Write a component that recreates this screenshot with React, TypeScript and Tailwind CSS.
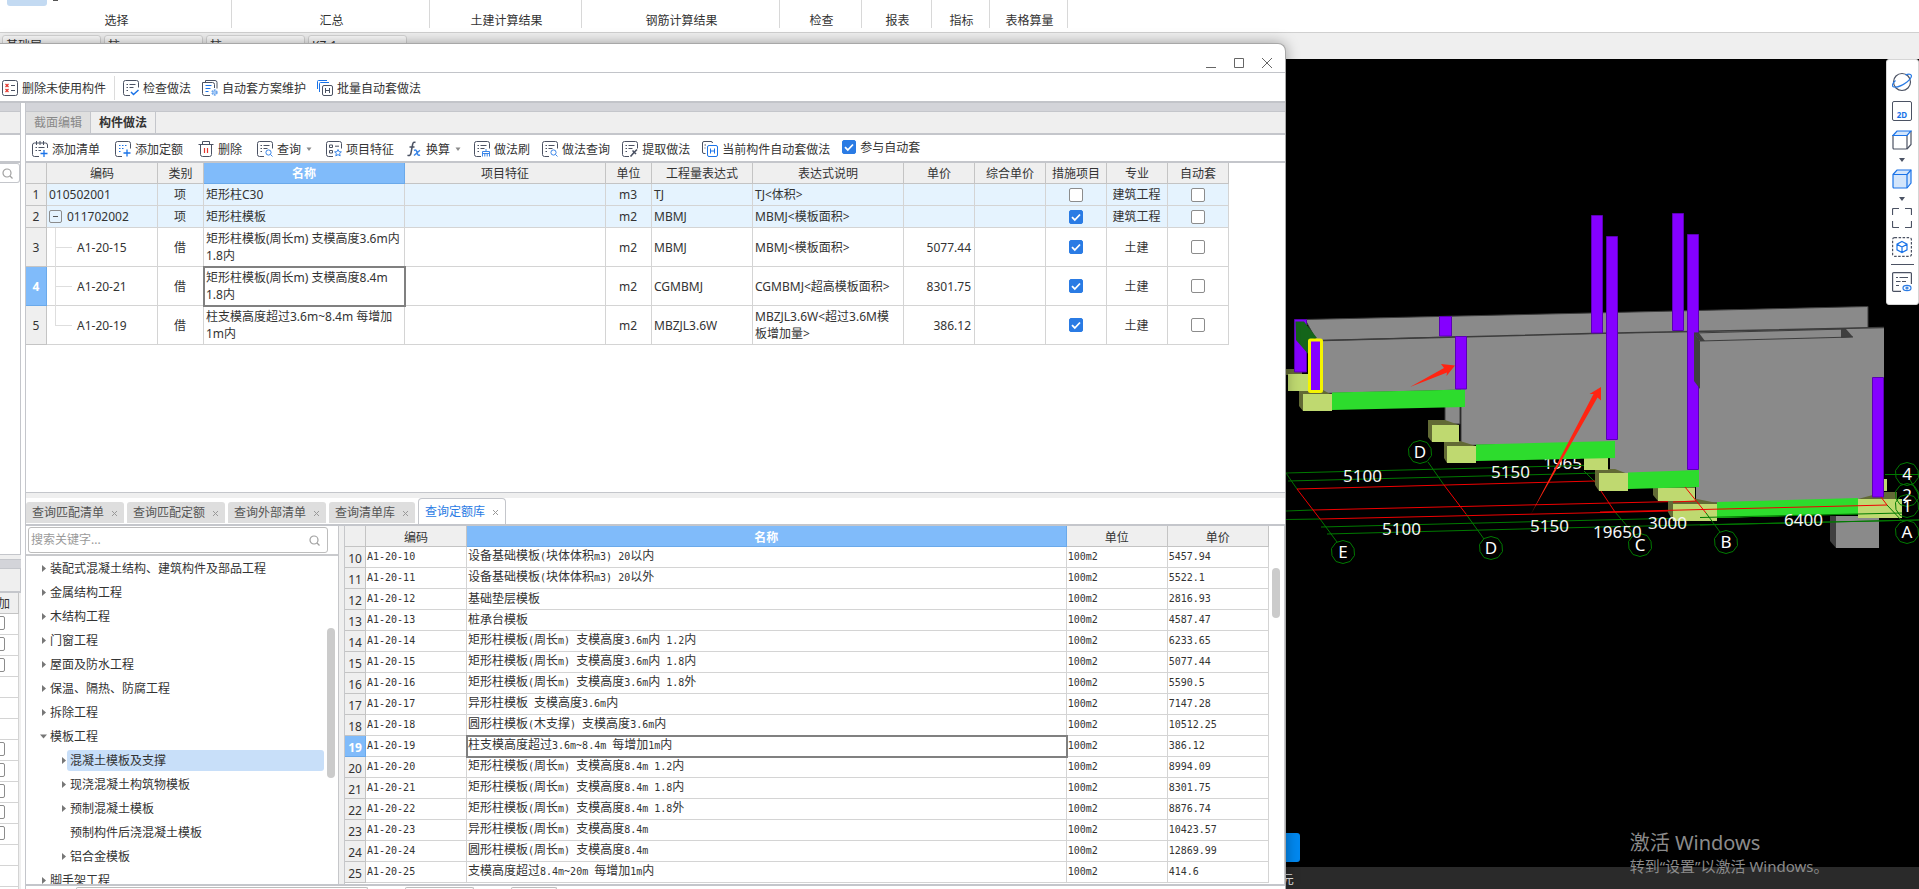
import type { ReactNode } from "react";

const UI_FONT = "font-['Noto_Sans','Noto_Sans_CJK_SC',sans-serif]";

const ribbonGroups = [
  { name: "选择", width: "w-[232px]" },
  { name: "汇总", width: "w-[198px]" },
  { name: "土建计算结果", width: "w-[152px]" },
  { name: "钢筋计算结果", width: "w-[198px]" },
  { name: "检查", width: "w-[82px]" },
  { name: "报表", width: "w-[70px]" },
  { name: "指标", width: "w-[58px]" },
  { name: "表格算量", width: "w-[78px]" },
];

const filters = [
  { label: "楼层", value: "基础层" },
  { label: "构件大类", value: "柱" },
  { label: "构件类型", value: "柱" },
  { label: "构件", value: "KZ-1" },
];

type MethodRow = {
  no: number;
  code: string;
  level: "root" | "parent" | "child";
  kind: string;
  name: string;
  unit: string;
  expr: string;
  desc: string;
  price: string;
  measure: boolean;
  major: string;
};

const methodRows: MethodRow[] = [
  { no: 1, code: "010502001", level: "root", kind: "项", name: "矩形柱C30", unit: "m3", expr: "TJ", desc: "TJ<体积>", price: "", measure: false, major: "建筑工程" },
  { no: 2, code: "011702002", level: "parent", kind: "项", name: "矩形柱模板", unit: "m2", expr: "MBMJ", desc: "MBMJ<模板面积>", price: "", measure: true, major: "建筑工程" },
  { no: 3, code: "A1-20-15", level: "child", kind: "借", name: "矩形柱模板(周长m) 支模高度3.6m内 1.8内", unit: "m2", expr: "MBMJ", desc: "MBMJ<模板面积>", price: "5077.44", measure: true, major: "土建" },
  { no: 4, code: "A1-20-21", level: "child", kind: "借", name: "矩形柱模板(周长m) 支模高度8.4m 1.8内", unit: "m2", expr: "CGMBMJ", desc: "CGMBMJ<超高模板面积>", price: "8301.75", measure: true, major: "土建" },
  { no: 5, code: "A1-20-19", level: "child", kind: "借", name: "柱支模高度超过3.6m~8.4m 每增加1m内", unit: "m2", expr: "MBZJL3.6W", desc: "MBZJL3.6W<超过3.6M模板增加量>", price: "386.12", measure: true, major: "土建" },
];

const quotaRows = [
  [10, "A1-20-10", "设备基础模板(块体体积m3) 20以内", "5457.94"],
  [11, "A1-20-11", "设备基础模板(块体体积m3) 20以外", "5522.1"],
  [12, "A1-20-12", "基础垫层模板", "2816.93"],
  [13, "A1-20-13", "桩承台模板", "4587.47"],
  [14, "A1-20-14", "矩形柱模板(周长m) 支模高度3.6m内 1.2内", "6233.65"],
  [15, "A1-20-15", "矩形柱模板(周长m) 支模高度3.6m内 1.8内", "5077.44"],
  [16, "A1-20-16", "矩形柱模板(周长m) 支模高度3.6m内 1.8外", "5590.5"],
  [17, "A1-20-17", "异形柱模板 支模高度3.6m内", "7147.28"],
  [18, "A1-20-18", "圆形柱模板(木支撑) 支模高度3.6m内", "10512.25"],
  [19, "A1-20-19", "柱支模高度超过3.6m~8.4m 每增加1m内", "386.12"],
  [20, "A1-20-20", "矩形柱模板(周长m) 支模高度8.4m 1.2内", "8994.09"],
  [21, "A1-20-21", "矩形柱模板(周长m) 支模高度8.4m 1.8内", "8301.75"],
  [22, "A1-20-22", "矩形柱模板(周长m) 支模高度8.4m 1.8外", "8876.74"],
  [23, "A1-20-23", "异形柱模板(周长m) 支模高度8.4m", "10423.57"],
  [24, "A1-20-24", "圆形柱模板(周长m) 支模高度8.4m", "12869.99"],
  [25, "A1-20-25", "支模高度超过8.4m~20m 每增加1m内", "414.6"],
] as const;

const tree = [
  { name: "装配式混凝土结构、建筑构件及部品工程", depth: 0, arrow: "right" },
  { name: "金属结构工程", depth: 0, arrow: "right" },
  { name: "木结构工程", depth: 0, arrow: "right" },
  { name: "门窗工程", depth: 0, arrow: "right" },
  { name: "屋面及防水工程", depth: 0, arrow: "right" },
  { name: "保温、隔热、防腐工程", depth: 0, arrow: "right" },
  { name: "拆除工程", depth: 0, arrow: "right" },
  { name: "模板工程", depth: 0, arrow: "down" },
  { name: "混凝土模板及支撑", depth: 1, arrow: "right", active: true },
  { name: "现浇混凝土构筑物模板", depth: 1, arrow: "right" },
  { name: "预制混凝土模板", depth: 1, arrow: "right" },
  { name: "预制构件后浇混凝土模板", depth: 1, arrow: "" },
  { name: "铝合金模板", depth: 1, arrow: "right" },
  { name: "脚手架工程", depth: 0, arrow: "right" },
];

const queryTabs = ["查询匹配清单", "查询匹配定额", "查询外部清单", "查询清单库", "查询定额库"];

/* ---------- icons ---------- */

function Icon({ children }: { children: ReactNode }) {
  return (
    <svg width="16" height="16" viewBox="0 0 16 16" fill="none" stroke="#4b5263" strokeWidth="1" className="shrink-0" aria-hidden="true">
      {children}
    </svg>
  );
}

const sheet = "M7 15.500H2.500a2 2 0 0 1-2-2V2.500a2 2 0 0 1 2-2h11a2 2 0 0 1 2 2v5";
const sheetLines = "M3.500 4.500h1.500M6.500 4.500h6M3.500 7.500h1.500M6.500 7.500h4M3.500 10.500h1.500";

const icons = {
  removeUnused: (
    <Icon>
      <rect x="0.500" y="0.500" width="15" height="15" rx="2" />
      <path d="M9 5.500h4M9 10.500h4" />
      <path stroke="#e5342b" strokeWidth="1.200" d="M3.500 4l3 3M6.500 4l-3 3M3.500 9l3 3M6.500 9l-3 3" />
    </Icon>
  ),
  check: (
    <Icon>
      <path d={sheet} />
      <path d={sheetLines} />
      <path stroke="#1a73e8" strokeWidth="1.500" d="M8 12l2.500 2.500L15.500 10" />
    </Icon>
  ),
  scheme: (
    <Icon>
      <path d="M3.500 2.500V.500h9.500a2 2 0 0 1 2 2v6" />
      <path d="M8 15.500H2.500a2 2 0 0 1-2-2V2.500h10a2 2 0 0 1 2 2V8" />
      <path stroke="#1a73e8" d="M3.500 5.500h6M3.500 8.500h5M3.500 11.500h3" />
      <circle cx="12.500" cy="12.500" r="2.300" stroke="#6fa8ee" strokeWidth="1.800" strokeDasharray="1.500 0.800" fill="#a8cbf5" />
    </Icon>
  ),
  batch: (
    <Icon>
      <path stroke="#1a73e8" d="M.500 9V1.500a1 1 0 0 1 1-1H10M2.500 12V3.500a1 1 0 0 1 1-1H12" />
      <rect x="5.500" y="5.500" width="10" height="10" rx="1.500" />
      <path d="M8.500 8v5M12.500 8v5M8.500 10.500h4" />
    </Icon>
  ),
  addList: (
    <Icon>
      <path d="M7 15.500H2.500a2 2 0 0 1-2-2V4a2 2 0 0 1 2-2h11a2 2 0 0 1 2 2v3" />
      <path d="M4.500 0v4M8 0v4M11.500 0v4M3.500 6.500h1.500M6.500 6.500h6M3.500 9.500h1.500M6.500 9.500H9" />
      <path stroke="#1a73e8" strokeWidth="1.300" d="M12 9v7M8.500 12.500h7" />
    </Icon>
  ),
  addQuota: (
    <Icon>
      <path d={sheet} />
      <path stroke="#1a73e8" strokeDasharray="1.500 1.500" d="M4 4.500h8M4 7.500h5M4 10.500h3" />
      <path stroke="#1a73e8" strokeWidth="1.300" d="M12 8.500v7M8.500 12h7" />
    </Icon>
  ),
  trash: (
    <Icon>
      <path d="M.500 3.500h15M4.500 3.500V.500h7v3M2.500 3.500v10a2 2 0 0 0 2 2h7a2 2 0 0 0 2-2v-10" />
      <path stroke="#e5342b" strokeWidth="1.200" d="M6.500 7v5M9.500 7v5" />
    </Icon>
  ),
  query: (
    <Icon>
      <path d={sheet} />
      <path d={sheetLines} />
      <circle cx="11.500" cy="11.500" r="2.600" stroke="#3b86e8" />
      <path stroke="#3b86e8" d="M13.500 13.500l2 2" />
    </Icon>
  ),
  feature: (
    <Icon>
      <path d="M7 15.500H2.500a2 2 0 0 1-2-2V2.500a2 2 0 0 1 2-2h11a2 2 0 0 1 2 2v5" />
      <path d="M3.500 4h3v2.500h-3zM3.500 9.500h3V12h-3zM9 5.200h4" />
      <path stroke="#3b86e8" d="M12 8.500l1 2.200 2.400.2-1.800 1.600.6 2.400-2.200-1.300-2.200 1.300.6-2.400-1.800-1.600 2.400-.2z" />
    </Icon>
  ),
  fx: (
    <Icon>
      <path strokeWidth="1.500" d="M9.500 1.500C8 .6 7 1.500 6.600 3.500L5 12c-.4 2-1.400 3.200-3.500 2.300M3.500 6h5" />
      <path stroke="#3b86e8" strokeWidth="1.500" d="M8 9.500c2-1 2.500 0 3 2s1 3.500 3 2.300M14 9.300L8 14.500" />
    </Icon>
  ),
  brush: (
    <Icon>
      <path d={sheet} />
      <path d={sheetLines} />
      <path stroke="#3b86e8" d="M12 8V10.500M8.500 10.500h7M8.500 12.500h7M8.500 10.500v5M10.800 12.500v3M13.200 12.500v3M15.500 10.500v5" />
    </Icon>
  ),
  extract: (
    <Icon>
      <path d={sheet} />
      <path d={sheetLines} />
      <path strokeWidth="1.600" d="M8.500 15.500l3.500-4M10.500 9.500l3.500 3.500M12.500 11l2.500-2.500" />
    </Icon>
  ),
  current: (
    <Icon>
      <path d="M3.500 12.500H2A1.500 1.500 0 0 1 .500 11V2A1.500 1.500 0 0 1 2 .500h7A1.500 1.500 0 0 1 10.500 2M2.500 4H4M2.500 7h1" />
      <rect x="5.500" y="4.500" width="10" height="11" rx="1.500" stroke="#1a73e8" />
      <path stroke="#1a73e8" d="M8.500 7.500v5M12.500 7.500v5M8.500 10h4" />
    </Icon>
  ),
};

function SearchGlyph() {
  return (
    <svg width="11" height="11" viewBox="0 0 11 11" fill="none" stroke="#a0a0a0" strokeWidth="1.200" aria-hidden="true">
      <circle cx="5" cy="5" r="4" />
      <path d="M8 8l2.500 2.500" />
    </svg>
  );
}

function Caret() {
  return (
    <svg width="8" height="5" viewBox="0 0 8 5" aria-hidden="true">
      <path d="M1.500 0.500h5L4 4z" fill="#8a8a8a" />
    </svg>
  );
}

/* ---------- small controls ---------- */

function Check({ checked, label }: { checked?: boolean; label?: string }) {
  return (
    <span className="relative inline-flex size-[14px] align-middle">
      <input
        type="checkbox"
        defaultChecked={checked}
        aria-label={label}
        className="peer size-[14px] appearance-none rounded-[2px] border border-[#8c8c8c] bg-white checked:border-[#2a7be4] checked:bg-[#2a7be4]"
      />
      <svg viewBox="0 0 14 14" fill="none" stroke="#fff" strokeWidth="1.800" className="pointer-events-none absolute inset-0 hidden peer-checked:block" aria-hidden="true">
        <path d="M3 7.200l2.800 2.800L11 4.500" />
      </svg>
    </span>
  );
}

function ToolButton({ icon, label, caret }: { icon: ReactNode; label: string; caret?: boolean }) {
  return (
    <button className="flex items-center gap-1 whitespace-nowrap">
      {icon}
      <span className="pt-[2px]">{label}</span>
      {caret && <Caret />}
    </button>
  );
}

// Latin runs are set in a half-width face so two letters fill one Chinese cell
function GridText({ text }: { text: string }) {
  return (
    <>
      {text.split(/([\x20-\x7e]+)/).map((part, i) =>
        i % 2 ? (
          <span key={i} className="whitespace-pre font-['DejaVu_Sans_Mono',monospace] text-[10px]">{part}</span>
        ) : (
          part
        )
      )}
    </>
  );
}

/* ---------- main window ---------- */

function Ribbon() {
  return (
    <header className="shrink-0">
      <nav className="relative flex h-[33px] border-b border-[#d0d0d0] bg-white">
        <span className="absolute left-[7px] top-0 h-[6px] w-[40px] rounded-b-[3px] bg-[#c3daf2]" />
        <span className="absolute left-[53px] top-0 h-px w-[5px] bg-[#555]" />
        {ribbonGroups.map((group) => (
          <div key={group.name} className={`${group.width} h-7 shrink-0 border-r border-[#d8d8d8] pl-[2px] pt-[13px] text-center leading-[15px]`}>
            {group.name}
          </div>
        ))}
      </nav>
      <div className="flex h-[26px] gap-[3px] bg-[#efefef] pl-[2px] pt-[2px]">
        {filters.map((filter) => (
          <select key={filter.label} aria-label={filter.label} className="h-[22px] w-[99px] appearance-none rounded-[3px] border border-[#d4d4d4] bg-[#fafafa] px-[3px] leading-5">
            <option>{filter.value}</option>
          </select>
        ))}
      </div>
    </header>
  );
}

const axisMarks = [
  ["D", 1420, 452], ["E", 1343, 552], ["D", 1491, 548], ["C", 1640, 545],
  ["B", 1726, 542], ["A", 1907, 532], ["4", 1907, 474], ["2", 1907, 495], ["1", 1907, 506],
] as const;

const spans = [
  ["5100", 1343, 482], ["5150", 1491, 478], ["5100", 1382, 535], ["5150", 1530, 532],
  ["19650", 1593, 538], ["3000", 1648, 529], ["6400", 1784, 526],
] as const;

function Model() {
  return (
    <svg viewBox="1286 59 633 808" preserveAspectRatio="xMinYMin meet" className="h-full w-full" role="img" aria-label="三维模型">
      <text x="1543" y="469" fill="#f5f5f5" fontSize="17">1965</text>

      {/* walls */}
      <g fill="#8a8a8a" stroke="#3c3c3c" strokeWidth="1">
        <path d="M1305 319.500L1591 313L1868 306.500V328L1317 341z" />
        <path d="M1322 340.500L1465 336.500V390L1322 393.500z" />
        <path d="M1445 405h15v19h-15z" />
      </g>
      <path d="M1461 337L1884 327.500V500L1696 503V474H1610V443L1461 445z" fill="#8a8a8a" />
      <path d="M1322 340.500L1591 333.500L1884 327.500" stroke="#3c3c3c" fill="none" strokeWidth="1.500" />
      <path d="M1461 407V445" stroke="#3c3c3c" />
      <path d="M1830 516h6v32l-6-7z" fill="#3f3f3f" />
      <path d="M1836 516h43v32h-43z" fill="#8a8a8a" />

      {/* axis grid */}
      <g stroke="#007a00" strokeWidth="1" fill="none">
        <path d="M1286 473L1600 465M1288 481L1600 473M1286 511L1313 510M1286 519.500L1320 519M1321 527L1600 520L1902 513M1327 534L1600 527L1919 520M1885 474.500H1919" />
        <path d="M1286 473L1297 489M1320 519L1337 542M1428 462L1444 485M1466 514L1484 539M1584 471L1595 482M1615 512L1635 535" />
      </g>
      <g stroke="#f00000" strokeWidth="1" fill="none">
        <path d="M1297 489L1595 481M1313 510L1696 501M1320 519L1670 511M1297 489L1320 519M1444 485L1466 514M1595 482L1615 512" />
      </g>

      {/* footings */}
      <g fill="#626a35">
        <path d="M1286 369h16v6h-16zM1299 390h24l9 5v16h-29l-4-5zM1428 420h17l14 5v17h-27l-4-5zM1444 441h16l16 5v17h-29l-3-5zM1595 469h20l13 5v17h-29l-4-6zM1653 487h42v14h-37l-5-6zM1668 498h24l25 5v18h-44l-5-9zM1884 492h13v7h-39z" />
      </g>
      <g fill="#bfd970">
        <path d="M1288 374h21v17h-21zM1303 394h29v17h-29zM1432 425h27v17h-27zM1447 446h29v17h-29zM1584 458h24v12h-24zM1599 473h29v18h-29zM1658 488h37v13h-37zM1673 504h44v17h-44zM1858 499h44v19h-44zM1884 479h3v12h-3z" />
      </g>

      {/* beams */}
      <g fill="#2ddc2d">
        <path d="M1332 392.500L1465 389.500V407L1332 410z" />
        <path d="M1476 444.500L1615 441V458L1476 461z" />
        <path d="M1628 472.500L1699 470V487L1628 489z" />
        <path d="M1717 502L1858 498V514L1717 518z" />
      </g>

      {/* columns */}
      <g fill="#8500ff" stroke="#5a00b4" strokeWidth="1">
        <path d="M1294.500 319.500h12V372h-12zM1439.500 316.500h12V336h-12zM1455.500 336.500h11V389h-11z" />
        <path d="M1591.500 215.500h11V333h-11zM1606.500 236.500h11v203h-11zM1672.500 213.500h11v117h-11zM1687.500 234.500h11V469.500h-11zM1872.500 377.500h11V497h-11z" />
      </g>
      <path d="M1295.500 321.500H1304L1317 338L1309 340V355L1296 340z" fill="#14651a" />
      <rect x="1309.500" y="340" width="12" height="51.500" rx="1" fill="#8500ff" stroke="#f4f400" strokeWidth="3" />

      {/* recess in the end wall */}
      <path d="M1694 333L1700 341V389L1694 381z" fill="#3f3f3f" />
      <path d="M1694 333H1699L1705 341H1700zM1841 329H1846L1853 337L1841 338z" fill="#3f3f3f" />
      <path d="M1700 341L1853 337M1694 333L1846 329" stroke="#3c3c3c" />

      {/* axis lines that run over the model */}
      <g strokeWidth="1" fill="none">
        <path stroke="#f00000" d="M1600 512L1887 505M1685 487L1706 513M1881 497L1887 505M1673 502L1696 501" />
        <path stroke="#007a00" d="M1700 517.500L1902 513M1700 525L1919 520M1706 513L1720 532M1887 505L1903 522M1910 480L1919 495" />
      </g>

      {axisMarks.map(([name, x, y]) => (
        <g key={`${name}-${x}-${y}`}>
          <path
            transform={`translate(${x} ${y})`}
            d="M0-11.500L7-9.500L11-3.500L11.500 3.500L7 9.500L0 11.500L-7 9.500L-11 3.500L-11.500-3.500L-7-9.500z"
            fill="none"
            stroke="#007a00"
          />
          <text x={x} y={y + 6} textAnchor="middle" fill="#fff" fontSize="17">{name}</text>
        </g>
      ))}
      {spans.map(([len, x, y]) => (
        <text key={`${len}-${x}`} x={x} y={y} fill="#f5f5f5" fontSize="17">{len}</text>
      ))}

      {/* pointer arrows */}
      <g fill="#ff2412">
        <path d="M1455 365.500L1441 364L1444 368L1410 387L1447 372.500L1446.500 376z" />
        <path d="M1601 387L1589.500 394H1593.500L1531 514L1597.500 397.500L1601 400.500z" />
      </g>
    </svg>
  );
}

function ViewIcon({ children }: { children: ReactNode }) {
  return (
    <svg width="20" height="20" viewBox="0 0 20 20" fill="none" stroke="#4b5263" strokeWidth="1.200" className="block" aria-hidden="true">
      {children}
    </svg>
  );
}

function ViewCaret() {
  return (
    <svg width="8" height="2" viewBox="0 0 8 2" className="-mb-px overflow-visible" aria-hidden="true">
      <path d="M1-1h6L4 3z" fill="#4b5263" />
    </svg>
  );
}

function ViewBar() {
  return (
    <aside className="absolute right-0 top-0 flex w-[33px] flex-col items-center gap-[9px] rounded-[3px] border border-[#d6d6d6] bg-white pb-[12px] pr-px pt-[12px]">
      <button aria-label="动态观察">
        <ViewIcon>
          <circle cx="10" cy="10" r="8.500" />
          <path stroke="#2a7be4" d="M3.500 8.500C0 11.500-.5 14.500 2 15c3 .6 9-2 13-5s5.500-6.500 3.500-7.500c-1.200-.6-3-.3-5 .4" />
        </ViewIcon>
      </button>
      <button aria-label="二维" className="flex size-[20px] items-end justify-center rounded-[2px] border border-[#4b5263] pb-px text-[8px] font-bold leading-[9px] text-[#1a73e8]">
        2D
      </button>
      <button aria-label="俯视">
        <ViewIcon>
          <path d="M1 5.500h14V18a1 1 0 0 1-1 1H2a1 1 0 0 1-1-1z" />
          <path d="M15 19l4-4.500V1" />
          <path stroke="#1a73e8" fill="#d3e5fb" d="M1 5.500L5 1h14l-4 4.500z" />
        </ViewIcon>
      </button>
      <ViewCaret />
      <button aria-label="实体显示">
        <ViewIcon>
          <g stroke="#1a73e8" fill="#d3e5fb">
            <path d="M1 5.500L5 1h14v13l-4 5H2a1 1 0 0 1-1-1z" />
            <path d="M1 5.500h14V19M15 5.500L19 1" fill="none" />
          </g>
        </ViewIcon>
      </button>
      <ViewCaret />
      <button aria-label="全屏">
        <ViewIcon>
          <path d="M.500 7V1.500a1 1 0 0 1 1-1H7M13 .500h5.500a1 1 0 0 1 1 1V7M19.500 13v5.500a1 1 0 0 1-1 1H13M7 19.500H1.500a1 1 0 0 1-1-1V13" />
        </ViewIcon>
      </button>
      <button aria-label="局部三维">
        <ViewIcon>
          <rect x="0.600" y="0.600" width="18.800" height="18.800" rx="2" strokeDasharray="2.500 1.500" />
          <path stroke="#1a73e8" d="M10 4.500l5 2.700v5.600l-5 2.700-5-2.700V7.200zM5 7.200l5 2.800 5-2.800M10 10v5.500" />
        </ViewIcon>
      </button>
      <hr className="-my-[2px] w-[23px] border-[#4b5263]" />
      <button aria-label="显示设置">
        <ViewIcon>
          <path d="M9 19.400H1.600a1 1 0 0 1-1-1V1.600a1 1 0 0 1 1-1h16.800a1 1 0 0 1 1 1V12" />
          <path d="M4 5.500h2M7.500 5.500H16M4 9.500h4.500M10 9.500h4M4 13.500h3" />
          <ellipse cx="15" cy="16" rx="4" ry="2.700" stroke="#2a7be4" />
          <circle cx="15" cy="16" r="1" stroke="#2a7be4" />
        </ViewIcon>
      </button>
    </aside>
  );
}

function Viewport() {
  return (
    <main className="relative ml-[67%] flex min-h-0 flex-1 flex-col bg-black">
      <div className="min-h-0 flex-1">
        <Model />
      </div>
      <button aria-label="消息" className="absolute bottom-[27px] left-[-8px] h-[29px] w-[22px] rounded-[3px] bg-[#0088f0]" />
      <footer className="h-[22px] shrink-0 bg-[#2a2a2a] leading-[26px] text-[#e8e8e8]">
        <span className="-ml-1">元</span>
      </footer>
      <div className="absolute bottom-[13px] left-[344px] whitespace-nowrap text-[#8b8b8b]">
        <p className="text-[20px] leading-[26px]">激活 Windows</p>
        <p className="text-[15px] leading-[20px]">转到“设置”以激活 Windows。</p>
      </div>
      <ViewBar />
    </main>
  );
}

/* ---------- dialog ---------- */

const th = "border-b border-r border-[#c4c4c4] bg-[#efefef] pt-px font-normal leading-4";
const thActive = "border-b border-r border-[#6aa9ea] bg-[#80bbfa] pt-px font-bold leading-4 text-white";

function MethodTable() {
  return (
    <table className="w-[1203px] table-fixed border-separate border-spacing-0 leading-[17px]">
      <colgroup>
        <col className="w-[21px]" />
        <col className="w-[111px]" />
        <col className="w-[46px]" />
        <col className="w-[201px]" />
        <col className="w-[201px]" />
        <col className="w-[46px]" />
        <col className="w-[101px]" />
        <col className="w-[151px]" />
        <col className="w-[71px]" />
        <col className="w-[71px]" />
        <col className="w-[61px]" />
        <col className="w-[61px]" />
        <col className="w-[61px]" />
      </colgroup>
      <thead>
        <tr className="h-[21px]">
          {["", "编码", "类别", "名称", "项目特征", "单位", "工程量表达式", "表达式说明", "单价", "综合单价", "措施项目", "专业", "自动套"].map((name) => (
            <th key={name} className={name === "名称" ? thActive : th}>{name}</th>
          ))}
        </tr>
      </thead>
      <tbody>
        {methodRows.map((row) => {
          const active = row.no === 4;
          const cell = `border-b border-r border-[#d4d4d4] pl-[2px] pr-[3px] ${row.level === "child" ? "bg-white" : "bg-[#e5f3fe]"}`;
          return (
            <tr key={row.no} className={row.level === "child" ? "h-[39px]" : "h-[22px]"}>
              <th className={active ? thActive : th}>{row.no}</th>
              <td className={`${cell} relative`}>
                {row.level === "parent" && (
                  <span className="flex items-center gap-[5px]">
                    <button aria-label="折叠" className="flex size-[13px] items-center justify-center rounded-[2px] border border-[#8c8c8c]">
                      <span className="h-px w-[5px] bg-[#555]" />
                    </button>
                    {row.code}
                  </span>
                )}
                {row.level === "root" && row.code}
                {row.level === "child" && (
                  <>
                    <span className={`absolute left-[8px] top-0 border-l border-[#dedede] ${row.no === 5 ? "h-[19px]" : "h-[39px]"}`} />
                    <span className="absolute left-[8px] top-[19px] w-[17px] border-t border-[#dedede]" />
                    <span className="pl-[28px]">{row.code}</span>
                  </>
                )}
              </td>
              <td className={`${cell} text-center`}>{row.kind}</td>
              <td className={active ? `${cell} relative outline-2 -outline-offset-1 outline-[#808080]` : cell}>{row.name}</td>
              <td className={cell} />
              <td className={`${cell} text-center`}>{row.unit}</td>
              <td className={cell}>{row.expr}</td>
              <td className={cell}>{row.desc}</td>
              <td className={`${cell} text-right`}>{row.price}</td>
              <td className={cell} />
              <td className={`${cell} text-center leading-none`}><Check checked={row.measure} label="措施项目" /></td>
              <td className={`${cell} text-center`}>{row.major}</td>
              <td className={`${cell} text-center leading-none`}><Check label="自动套" /></td>
            </tr>
          );
        })}
      </tbody>
    </table>
  );
}

function QuotaTree() {
  return (
    <div className="relative flex w-[313px] shrink-0 flex-col border-r border-[#c6c7ca] bg-white">
      <div className="h-[30px] shrink-0 border-b-2 border-[#c9cacd] pl-[2px] pt-px">
        <label className="flex h-[26px] w-[300px] items-center rounded-[3px] border border-[#bdbdbd] pl-[2px] pr-[7px]">
          <input placeholder="搜索关键字..." aria-label="搜索关键字" className="min-w-0 flex-1 outline-none placeholder:text-[#9a9a9a]" />
          <SearchGlyph />
        </label>
      </div>
      <ul className="min-h-0 flex-1 overflow-hidden">
        {tree.map((node) => (
          <li key={node.name} className={`flex h-6 items-center ${node.depth ? "pl-[34px]" : "pl-[14px]"}`}>
            <svg width="7" height="7" viewBox="0 0 7 7" className="shrink-0" aria-hidden="true">
              {node.arrow === "right" && <path d="M2 0l4 3.500L2 7z" fill="#777" />}
              {node.arrow === "down" && <path d="M0 1.500h7L3.500 5.500z" fill="#777" />}
            </svg>
            <a
              href="#"
              className={node.active ? "mr-[14px] h-[21px] flex-1 rounded-[3px] bg-[#c8dff9] pl-[3px] leading-[21px]" : "pl-[3px] leading-[21px]"}
            >
              {node.name}
            </a>
          </li>
        ))}
      </ul>
      <span className="absolute right-[3px] top-[102px] h-[150px] w-2 rounded-full bg-[#cbcbcb]" />
    </div>
  );
}

function QuotaTable() {
  return (
    <div className="relative flex min-w-0 flex-1 overflow-hidden border-x border-[#c6c7ca] bg-white pr-[15px]">
      <table className="h-fit w-full table-fixed border-separate border-spacing-0 font-['Noto_Sans_CJK_SC',sans-serif] leading-4">
        <colgroup>
          <col className="w-[21px]" />
          <col className="w-[101px]" />
          <col />
          <col className="w-[101px]" />
          <col className="w-[101px]" />
        </colgroup>
        <thead>
          <tr className="h-[21px]">
            {["", "编码", "名称", "单位", "单价"].map((name) => (
              <th key={name} className={name === "名称" ? thActive : th}>{name}</th>
            ))}
          </tr>
        </thead>
        <tbody>
          {quotaRows.map(([no, code, name, price]) => {
            const cell = "border-b border-r border-[#d4d4d4] px-px pb-[2px]";
            return (
              <tr key={no} className="h-[21px]">
                <th className={`${no === 19 ? thActive : th} ${UI_FONT}`}>
                  <span className="block pt-[2px]">{no}</span>
                </th>
                <td className={cell}><GridText text={code} /></td>
                <td className={no === 19 ? `${cell} relative outline-2 -outline-offset-1 outline-[#808080]` : cell}>
                  <GridText text={name} />
                </td>
                <td className={cell}><GridText text="100m2" /></td>
                <td className={cell}><GridText text={price} /></td>
              </tr>
            );
          })}
        </tbody>
      </table>
      <span className="absolute right-1 top-[42px] h-[50px] w-2 rounded-full bg-[#cbcbcb]" />
    </div>
  );
}

function SideSliver() {
  const flags = [true, true, true, false, false, false, true, true, true, true, true, false, false, false];
  return (
    <aside className="flex w-[21px] shrink-0 flex-col overflow-hidden bg-[#efefef]">
      <div className="flex h-[452px] shrink-0 flex-col border-b border-r border-[#c4c6cb] bg-white">
        <div className="h-[9px] shrink-0 border-b border-[#c4c6cb] bg-[#d3d4d9]" />
        <div className="h-[23px] shrink-0 border-b-2 border-[#c4c6cb] bg-[#efefef]" />
        <div className="h-[28px] shrink-0 border-b-2 border-[#c4c6cb]" />
        <div className="flex h-[20px] shrink-0 items-center rounded-r-[3px] border-y border-r border-[#c4c6cb] pl-[2px]">
          <SearchGlyph />
        </div>
      </div>
      <div className="mt-1 h-[10px] shrink-0 border-y border-[#c4c6cb] bg-[#d3d4d9]" />
      <div className="h-[24px] shrink-0 border-b-2 border-r border-[#c4c6cb] bg-[#efefef]" />
      <table className="w-[19px] table-fixed border-separate border-spacing-0">
        <thead>
          <tr className="h-[21px]">
            <th className={`${th} text-left`}>
              <span className="-ml-[2px]">加</span>
            </th>
          </tr>
        </thead>
        <tbody>
          {flags.map((shown, i) => (
            <tr key={i} className="h-[21px]">
              <td className="border-b border-r border-[#d4d4d4] bg-white leading-none">
                {shown && (
                  <span className="-ml-[9px] inline-flex">
                    <Check label="附加" />
                  </span>
                )}
              </td>
            </tr>
          ))}
        </tbody>
      </table>
    </aside>
  );
}

function MethodDialog() {
  return (
    <section
      role="dialog"
      aria-label="构件做法"
      className="absolute bottom-0 left-0 top-[43px] flex w-[67%] flex-col overflow-hidden rounded-tr-[8px] border-r border-t border-[#a8a8a8] bg-white shadow-[0_0_14px_rgba(0,0,0,0.35)]"
    >
      <div className="flex h-[29px] shrink-0 items-center justify-end gap-[18px] border-b border-[#c2c4c9] pr-[13px] pt-[9px]">
        {[
          ["最小化", "M0 9.500h10"],
          ["最大化", "M0.500 0.500h9v9h-9z"],
          ["关闭", "M0 0l10 10M10 0L0 10"],
        ].map(([label, d]) => (
          <button key={label} aria-label={label}>
            <svg width="10" height="10" viewBox="0 0 10 10" fill="none" stroke="#666" aria-hidden="true">
              <path d={d} />
            </svg>
          </button>
        ))}
      </div>

      <div className="flex h-[30px] shrink-0 items-center border-b-2 border-[#c2c4c9] pl-[2px] pt-[2px]">
        <ToolButton icon={icons.removeUnused} label="删除未使用构件" />
        <span className="mx-2 h-6 w-px bg-[#dcdcdc]" />
        <div className="flex gap-[11px]">
          <ToolButton icon={icons.check} label="检查做法" />
          <ToolButton icon={icons.scheme} label="自动套方案维护" />
          <ToolButton icon={icons.batch} label="批量自动套做法" />
        </div>
      </div>

      <div className="flex min-h-0 flex-1">
        <SideSliver />
        <div className="ml-1 flex min-w-0 flex-1 flex-col border-l border-[#c4c6cb]">
          <div className="h-[9px] shrink-0 border-b border-[#c4c6cb] bg-[#d3d4d9]" />
          <div className="flex h-[23px] shrink-0 border-b-2 border-[#c4c6cb] bg-[#efefef]">
            <button className="w-[65px] border-r border-[#c4c6cb] bg-[#dfdfdf] text-[#888]">截面编辑</button>
            <button className="w-[65px] border-r border-[#c4c6cb] font-bold">构件做法</button>
          </div>
          <div className="flex h-[28px] shrink-0 items-center gap-[13px] border-b-2 border-[#c4c6cb] pl-[6px] pt-[2px]">
            <div className="flex gap-[15px]">
              <ToolButton icon={icons.addList} label="添加清单" />
              <ToolButton icon={icons.addQuota} label="添加定额" />
              <ToolButton icon={icons.trash} label="删除" />
              <ToolButton icon={icons.query} label="查询" caret />
            </div>
            <div className="flex items-center gap-3">
              <ToolButton icon={icons.feature} label="项目特征" />
              <ToolButton icon={icons.fx} label="换算" caret />
              <ToolButton icon={icons.brush} label="做法刷" />
              <ToolButton icon={icons.query} label="做法查询" />
              <ToolButton icon={icons.extract} label="提取做法" />
              <ToolButton icon={icons.current} label="当前构件自动套做法" />
              <label className="flex items-center gap-1 pb-1">
                <Check checked />
                <span className="pt-px">参与自动套</span>
              </label>
            </div>
          </div>

          <div className="min-h-0 flex-1 border-b border-[#c4c6cb]">
            <MethodTable />
          </div>

          <div className="flex h-[396px] shrink-0 flex-col border-t-[5px] border-[#efefef]">
            <div className="flex h-7 shrink-0 items-end gap-[3px] border-b-2 border-[#c4c6cb]">
              {queryTabs.map((tab, i) => (
                <button
                  key={tab}
                  className={
                    i === 4
                      ? "flex h-[26px] items-center gap-[7px] rounded-t-[4px] border border-b-0 border-[#c4c6cb] pl-[6px] pr-[6px] pt-px text-[#2a7be4]"
                      : "mb-px flex h-[21px] items-center gap-[7px] rounded-t-[3px] bg-[#dedede] pl-[6px] pr-[6px] pt-px text-[#555]"
                  }
                >
                  {tab}
                  <svg width="7" height="7" viewBox="0 0 7 7" stroke="#999" aria-hidden="true">
                    <path d="M1 1l5 5M6 1L1 6" />
                  </svg>
                </button>
              ))}
            </div>
            <div className="flex min-h-0 flex-1 gap-[5px] bg-[#efefef]">
              <QuotaTree />
              <QuotaTable />
            </div>
            <div className="flex h-[5px] shrink-0 items-end overflow-hidden border-t-2 border-[#c4c6cb] pl-[50px]">
              <span className="h-[2px] w-[292px] rounded-t-[3px] border border-b-0 border-[#bdbdbd]" />
              <span className="ml-[37px] h-[2px] w-[69px] rounded-t-[3px] border border-b-0 border-[#bdbdbd]" />
              <span className="ml-[37px] h-[2px] w-[46px] rounded-t-[3px] border border-b-0 border-[#bdbdbd]" />
            </div>
          </div>
        </div>
      </div>
    </section>
  );
}

export default function App() {
  return (
    <div className={`relative flex h-screen flex-col overflow-hidden bg-[#efefef] text-[12px] text-[#333] ${UI_FONT}`}>
      <Ribbon />
      <Viewport />
      <MethodDialog />
    </div>
  );
}
